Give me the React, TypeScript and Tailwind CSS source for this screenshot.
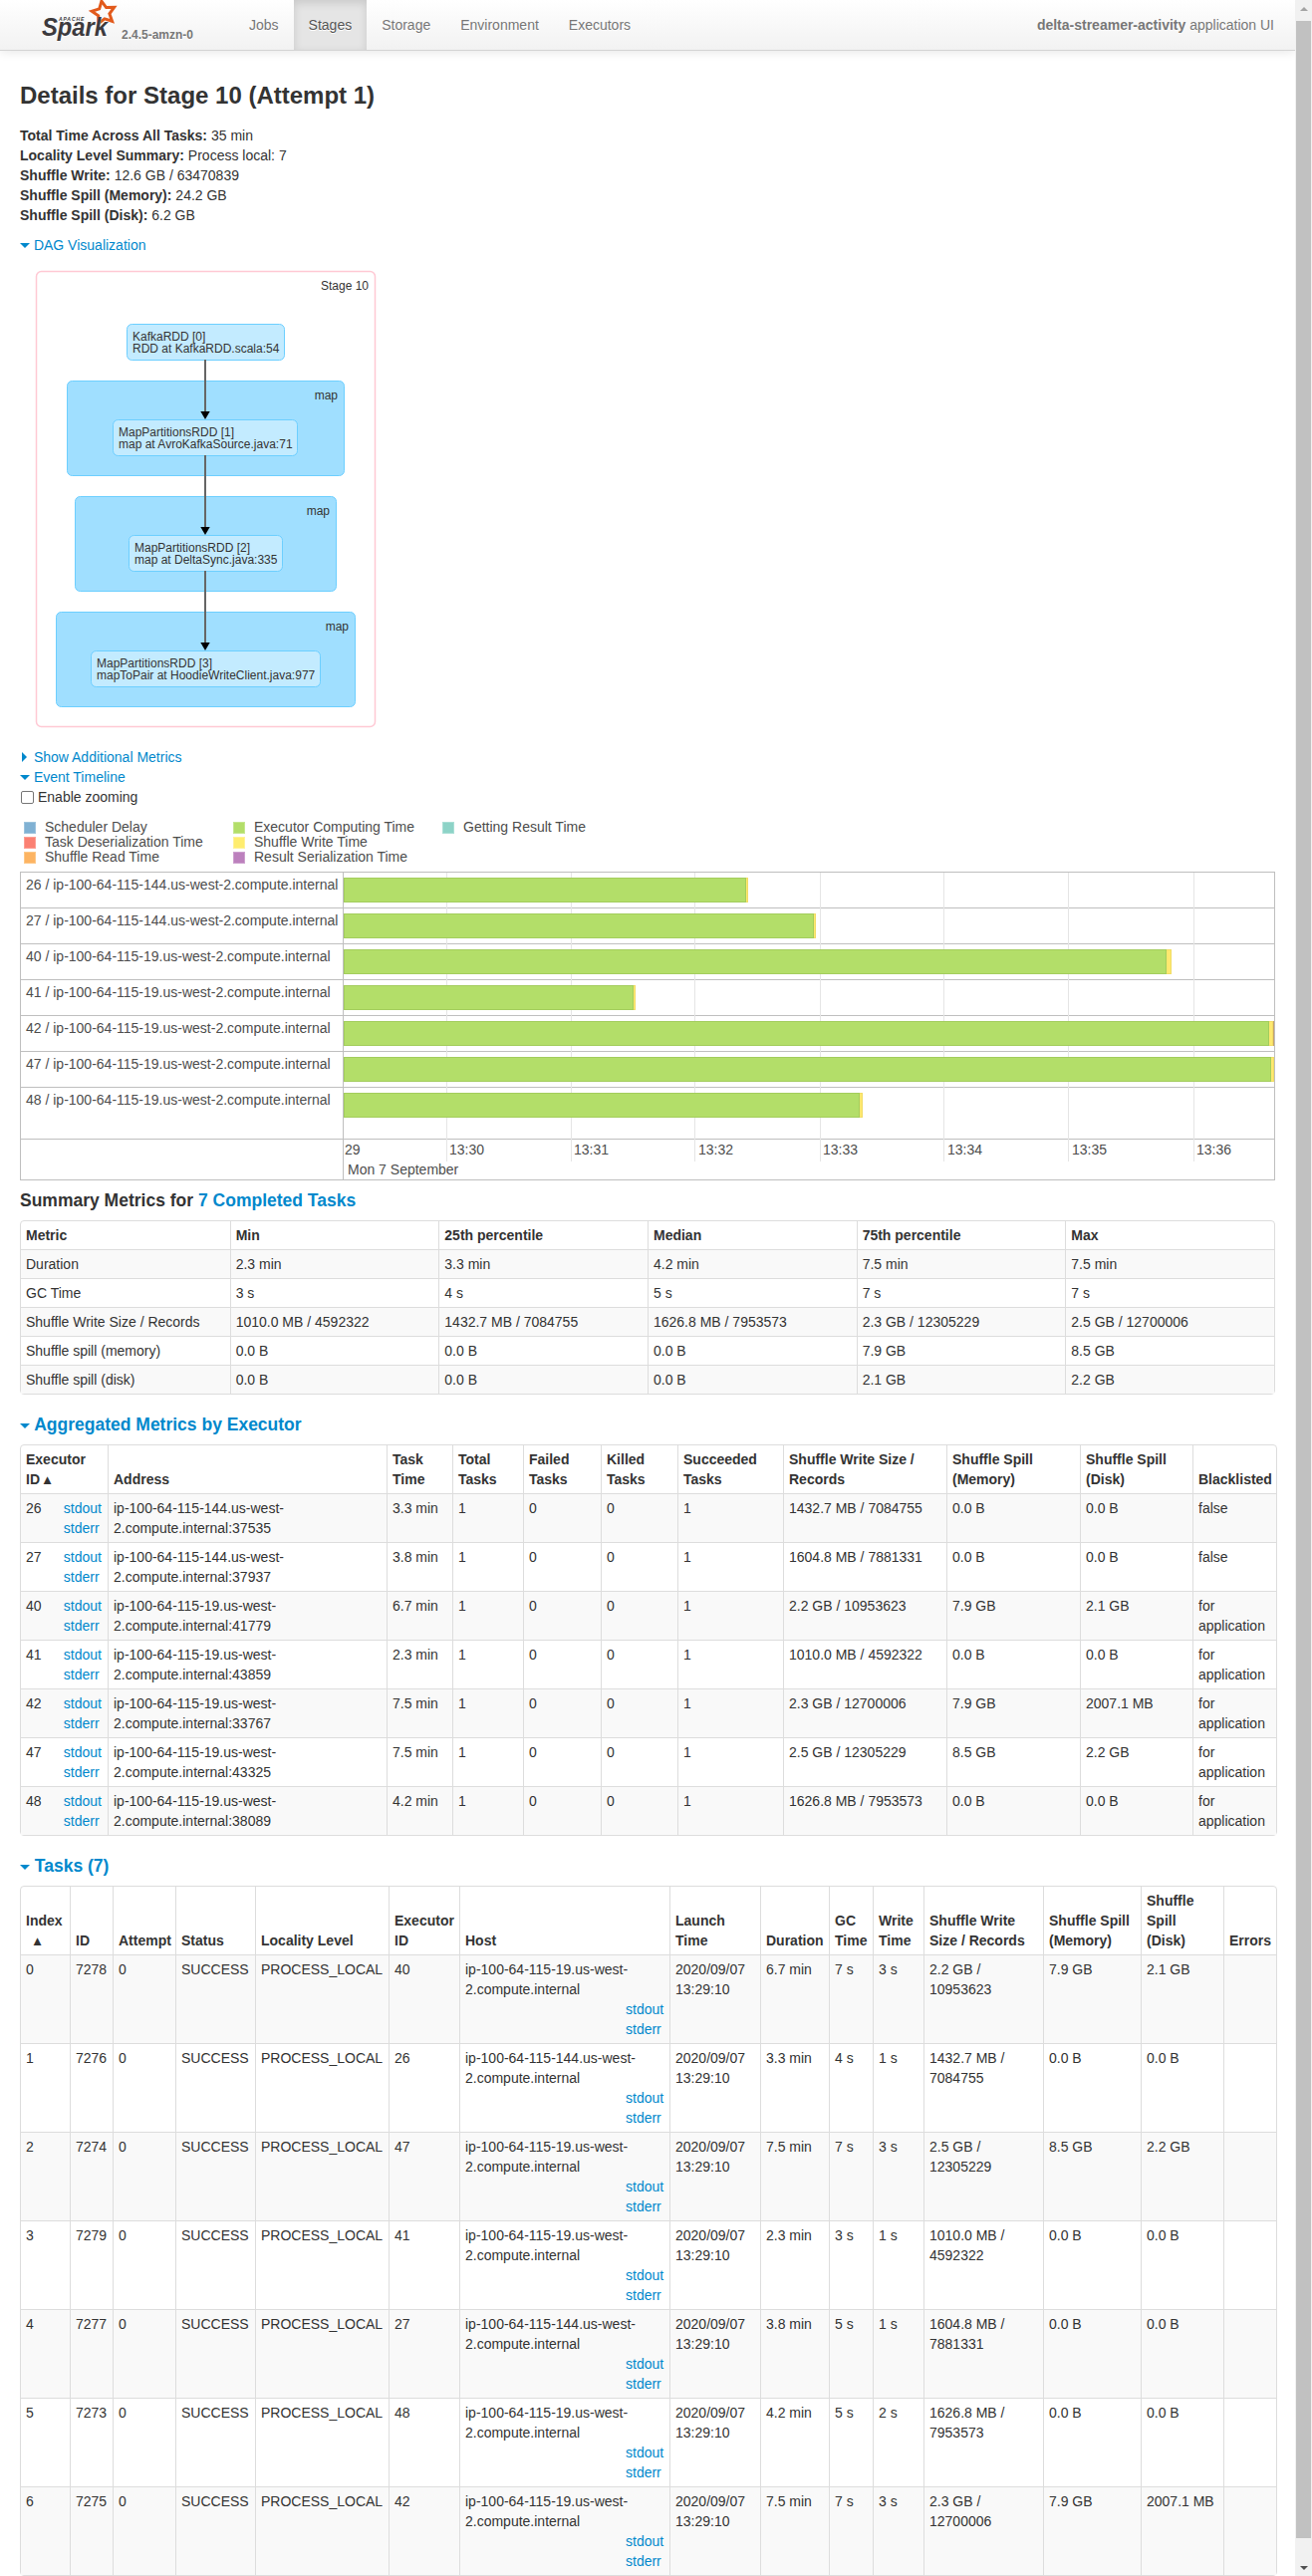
import React from 'react';

const FONT = "font-['Liberation_Sans',Arial,sans-serif]";

const HOST_144 = 'ip-100-64-115-144.us-west-2.compute.internal';
const HOST_19 = 'ip-100-64-115-19.us-west-2.compute.internal';

const summaryRows = [
  ['Duration', '2.3 min', '3.3 min', '4.2 min', '7.5 min', '7.5 min'],
  ['GC Time', '3 s', '4 s', '5 s', '7 s', '7 s'],
  ['Shuffle Write Size / Records', '1010.0 MB / 4592322', '1432.7 MB / 7084755', '1626.8 MB / 7953573', '2.3 GB / 12305229', '2.5 GB / 12700006'],
  ['Shuffle spill (memory)', '0.0 B', '0.0 B', '0.0 B', '7.9 GB', '8.5 GB'],
  ['Shuffle spill (disk)', '0.0 B', '0.0 B', '0.0 B', '2.1 GB', '2.2 GB'],
];

const executors = [
  ['26', HOST_144 + ':37535', '3.3 min', '1432.7 MB / 7084755', '0.0 B', '0.0 B', 'false'],
  ['27', HOST_144 + ':37937', '3.8 min', '1604.8 MB / 7881331', '0.0 B', '0.0 B', 'false'],
  ['40', HOST_19 + ':41779', '6.7 min', '2.2 GB / 10953623', '7.9 GB', '2.1 GB', 'for application'],
  ['41', HOST_19 + ':43859', '2.3 min', '1010.0 MB / 4592322', '0.0 B', '0.0 B', 'for application'],
  ['42', HOST_19 + ':33767', '7.5 min', '2.3 GB / 12700006', '7.9 GB', '2007.1 MB', 'for application'],
  ['47', HOST_19 + ':43325', '7.5 min', '2.5 GB / 12305229', '8.5 GB', '2.2 GB', 'for application'],
  ['48', HOST_19 + ':38089', '4.2 min', '1626.8 MB / 7953573', '0.0 B', '0.0 B', 'for application'],
];

const tasks = [
  ['0', '7278', '40', HOST_19, '6.7 min', '7 s', '3 s', '2.2 GB / 10953623', '7.9 GB', '2.1 GB'],
  ['1', '7276', '26', HOST_144, '3.3 min', '4 s', '1 s', '1432.7 MB / 7084755', '0.0 B', '0.0 B'],
  ['2', '7274', '47', HOST_19, '7.5 min', '7 s', '3 s', '2.5 GB / 12305229', '8.5 GB', '2.2 GB'],
  ['3', '7279', '41', HOST_19, '2.3 min', '3 s', '1 s', '1010.0 MB / 4592322', '0.0 B', '0.0 B'],
  ['4', '7277', '27', HOST_144, '3.8 min', '5 s', '1 s', '1604.8 MB / 7881331', '0.0 B', '0.0 B'],
  ['5', '7273', '48', HOST_19, '4.2 min', '5 s', '2 s', '1626.8 MB / 7953573', '0.0 B', '0.0 B'],
  ['6', '7275', '42', HOST_19, '7.5 min', '7 s', '3 s', '2.3 GB / 12700006', '7.9 GB', '2007.1 MB'],
];

// px widths read off the reference: green run, yellow run, trailing sliver
const timelineRows = [
  { label: '26 / ' + HOST_144, green: 404, yellow: 2, tail: 0 },
  { label: '27 / ' + HOST_144, green: 472, yellow: 2, tail: 0 },
  { label: '40 / ' + HOST_19, green: 826, yellow: 5, tail: 0 },
  { label: '41 / ' + HOST_19, green: 291, yellow: 2, tail: 0 },
  { label: '42 / ' + HOST_19, green: 929, yellow: 4, tail: 1 },
  { label: '47 / ' + HOST_19, green: 931, yellow: 3, tail: 0 },
  { label: '48 / ' + HOST_19, green: 518, yellow: 3, tail: 0 },
];

const gridLines = [427, 552, 676, 802, 926, 1051, 1177];
const axisLabels = [
  { text: '29', left: 325 },
  { text: '13:30', left: 430 },
  { text: '13:31', left: 555 },
  { text: '13:32', left: 680 },
  { text: '13:33', left: 805 },
  { text: '13:34', left: 930 },
  { text: '13:35', left: 1055 },
  { text: '13:36', left: 1180 },
];

const legend = [
  { label: 'Scheduler Delay', swatch: 'bg-[#80b1d3] border-[#9cc3dd]' },
  { label: 'Task Deserialization Time', swatch: 'bg-[#fb8072] border-[#fc9f94]' },
  { label: 'Shuffle Read Time', swatch: 'bg-[#fdb462] border-[#fdc888]' },
  { label: 'Executor Computing Time', swatch: 'bg-[#b3de69] border-[#c6e78f]' },
  { label: 'Shuffle Write Time', swatch: 'bg-[#ffed6f] border-[#fff29a]' },
  { label: 'Result Serialization Time', swatch: 'bg-[#bc80bd] border-[#cda0ce]' },
  { label: 'Getting Result Time', swatch: 'bg-[#8dd3c7] border-[#aadfd6]' },
];

const dagClusters = [
  { x: 47, y: 120, w: 278, h: 95, labelX: 319, labelY: 139 },
  { x: 55, y: 236, w: 262, h: 95, labelX: 311, labelY: 255 },
  { x: 36, y: 352, w: 300, h: 95, labelX: 330, labelY: 371 },
];

const dagNodes = [
  { x: 107, y: 63, w: 158, h: 36, tx: 113, a: 'KafkaRDD [0]', b: 'RDD at KafkaRDD.scala:54' },
  { x: 93, y: 159, w: 185, h: 36, tx: 99, a: 'MapPartitionsRDD [1]', b: 'map at AvroKafkaSource.java:71' },
  { x: 109, y: 275, w: 154, h: 36, tx: 115, a: 'MapPartitionsRDD [2]', b: 'map at DeltaSync.java:335' },
  { x: 71, y: 391, w: 230, h: 36, tx: 77, a: 'MapPartitionsRDD [3]', b: 'mapToPair at HoodieWriteClient.java:977' },
];

const dagEdges = [
  [99, 159],
  [195, 275],
  [311, 391],
];

function starPoints() {
  const pts: string[] = [];
  for (let i = 0; i < 10; i++) {
    const r = i % 2 === 0 ? 12 : 6;
    const a = ((-100 + i * 36) * Math.PI) / 180;
    pts.push(`${(103 + r * Math.cos(a)).toFixed(1)},${(13 + r * Math.sin(a)).toFixed(1)}`);
  }
  return pts.join(' ');
}

function SparkLogo() {
  return (
    <svg width="80" height="44" viewBox="40 0 80 44" className="shrink-0">
      <polygon points={starPoints()} fill="none" stroke="#e25a1c" strokeWidth="3" strokeLinejoin="miter" />
      <text x="58" y="20.5" fontSize="5" fontWeight="700" fontStyle="italic" fill="#3c3a3e" letterSpacing="0.9" fontFamily="'Liberation Sans', Arial, sans-serif">
        APACHE
      </text>
      <text x="41" y="36" fontSize="25" fontWeight="700" fontStyle="italic" fill="#3c3a3e" textLength="66" lengthAdjust="spacingAndGlyphs" fontFamily="'Liberation Sans', Arial, sans-serif">
        Spark
      </text>
    </svg>
  );
}

function Navbar() {
  const tabs = ['Jobs', 'Stages', 'Storage', 'Environment', 'Executors'];
  return (
    <div className="flex h-[51px] items-stretch border-b border-[#d4d4d4] bg-gradient-to-b from-white to-[#f2f2f2] text-[14px] shadow-[0_1px_10px_rgba(0,0,0,0.1)] [text-shadow:0_1px_0_#fff]">
      <div className="flex w-[235px] items-start pl-[41px]">
        <SparkLogo />
        <span className="mt-[27px] ml-[1px] text-[12px] leading-[16px] font-bold text-[#777]">2.4.5-amzn-0</span>
      </div>
      {tabs.map((tab) => (
        <div
          key={tab}
          className={
            tab === 'Stages'
              ? 'bg-[#e5e5e5] px-[15px] leading-[50px] text-[#555] shadow-[inset_0_3px_8px_rgba(0,0,0,0.125)]'
              : 'px-[15px] leading-[50px] text-[#777]'
          }
        >
          {tab}
        </div>
      ))}
      <div className="ml-auto pr-[21px] leading-[50px] text-[#777]">
        <strong>delta-streamer-activity</strong> application UI
      </div>
    </div>
  );
}

function CaretOpen() {
  return <span className="mb-[2px] inline-block border-x-[5px] border-t-[5px] border-x-transparent border-t-[#0088cc]" />;
}

function CaretClosed() {
  return <span className="mr-[3px] ml-[2px] inline-block border-y-[5px] border-l-[5px] border-y-transparent border-l-[#0088cc]" />;
}

function DagViz() {
  return (
    <svg width="360" height="488" viewBox="0 0 360 488" className="mt-[6px] ml-0 block" fontFamily="'Liberation Sans', Arial, sans-serif" fontSize="12">
      <rect x="16.5" y="10.5" width="340" height="457" rx="5" fill="#fff" stroke="#ffc9d4" strokeWidth="1.5" />
      <text x="350" y="29" textAnchor="end" fill="#333">
        Stage 10
      </text>
      {dagClusters.map((c) => (
        <g key={c.y}>
          <rect x={c.x + 0.5} y={c.y + 0.5} width={c.w} height={c.h} rx="5" fill="#a0dfff" stroke="#6dcfff" strokeWidth="1" />
          <text x={c.labelX} y={c.labelY} textAnchor="end" fill="#333">
            map
          </text>
        </g>
      ))}
      {dagNodes.map((n) => (
        <g key={n.y}>
          <rect x={n.x + 0.5} y={n.y + 0.5} width={n.w} height={n.h} rx="5" fill="#c3ebff" stroke="#6dcfff" strokeWidth="1" />
          <text x={n.tx} y={n.y + 17} fill="#333">
            {n.a}
          </text>
          <text x={n.tx} y={n.y + 29} fill="#333">
            {n.b}
          </text>
        </g>
      ))}
      {dagEdges.map(([from, to]) => (
        <g key={from}>
          <line x1="186" y1={from} x2="186" y2={to - 8} stroke="#666" strokeWidth="2" />
          <polygon points={`181.3,${to - 8} 190.7,${to - 8} 186,${to}`} fill="#000" />
        </g>
      ))}
    </svg>
  );
}

function Timeline() {
  return (
    <div className="mt-[7px] w-[1260px] border border-[#bfbfbf] text-[14px] leading-[20px] text-[#4d4d4d]">
      <div className="relative">
        {gridLines.map((x) => (
          <div key={x} className="absolute top-0 h-[290px] w-px bg-[#e5e5e5]" style={{ left: x }} />
        ))}
        {timelineRows.map((row, i) => (
          <div key={row.label} className={i === 6 ? 'flex h-[52px] border-b border-[#bfbfbf]' : 'flex h-[36px] border-b border-[#bfbfbf]'}>
            <div className="relative w-[324px] shrink-0 border-r border-[#bfbfbf] bg-white pt-[2px] pl-[5px] whitespace-nowrap">{row.label}</div>
            <div className="relative flex h-[25px] pt-0 mt-[5px]">
              <div className="border border-[#a3cd5d] bg-[#b3de69]" style={{ width: row.green }} />
              <div className="border-y border-r border-[#f0dc66] bg-[#ffe86f]" style={{ width: row.yellow }} />
              {row.tail > 0 && <div className="bg-[#c6a36b]" style={{ width: row.tail }} />}
            </div>
          </div>
        ))}
        <div className="relative flex h-[40px]">
          <div className="w-[324px] shrink-0 border-r border-[#bfbfbf] bg-white" />
          {axisLabels.map((a) => (
            <span key={a.text} className="absolute top-0" style={{ left: a.left }}>
              {a.text}
            </span>
          ))}
          <span className="absolute top-[20px] left-[328px]">Mon 7 September</span>
        </div>
      </div>
    </div>
  );
}

const TH = 'border-l border-[#ddd] px-[5px] py-1 text-left align-bottom font-bold first:border-l-0';
const TD = 'border-t border-l border-[#ddd] px-[5px] py-1 align-top first:border-l-0';
const TABLE = 'w-[1260px] table-fixed border-separate border-spacing-0 rounded-[4px] border border-[#ddd] text-[14px] leading-[20px]';

function Links() {
  return (
    <div className="text-[#0088cc]">
      <div>stdout</div>
      <div>stderr</div>
    </div>
  );
}

function SummaryTable() {
  const head = ['Metric', 'Min', '25th percentile', 'Median', '75th percentile', 'Max'];
  return (
    <table className={`mt-[10px] ${TABLE}`}>
      <thead>
        <tr>
          {head.map((h) => (
            <th key={h} className={TH}>
              {h}
            </th>
          ))}
        </tr>
      </thead>
      <tbody>
        {summaryRows.map((row, i) => (
          <tr key={row[0]} className={i % 2 === 0 ? 'bg-[#f9f9f9]' : ''}>
            {row.map((v, j) => (
              <td key={j} className={TD}>
                {v}
              </td>
            ))}
          </tr>
        ))}
      </tbody>
    </table>
  );
}

function ExecutorTable() {
  const head: [React.ReactNode, string][] = [
    [<>Executor ID&nbsp;▴</>, 'w-[87px]'],
    ['Address', 'w-[280px]'],
    ['Task Time', 'w-[66px]'],
    ['Total Tasks', 'w-[71px]'],
    ['Failed Tasks', 'w-[78px]'],
    ['Killed Tasks', 'w-[77px]'],
    ['Succeeded Tasks', 'w-[106px]'],
    ['Shuffle Write Size / Records', 'w-[164px]'],
    ['Shuffle Spill (Memory)', 'w-[134px]'],
    ['Shuffle Spill (Disk)', 'w-[113px]'],
    ['Blacklisted', 'w-[84px]'],
  ];
  return (
    <table className={`mt-[10px] ${TABLE}`}>
      <thead>
        <tr>
          {head.map(([h, w], i) => (
            <th key={i} className={`${TH} ${w}`}>
              {h}
            </th>
          ))}
        </tr>
      </thead>
      <tbody>
        {executors.map((e, i) => (
          <tr key={e[0]} className={i % 2 === 0 ? 'bg-[#f9f9f9]' : ''}>
            <td className={TD}>
              <div className="flex justify-between pr-[1px]">
                <span>{e[0]}</span>
                <Links />
              </div>
            </td>
            <td className={TD}>{e[1]}</td>
            <td className={TD}>{e[2]}</td>
            <td className={TD}>1</td>
            <td className={TD}>0</td>
            <td className={TD}>0</td>
            <td className={TD}>1</td>
            <td className={TD}>{e[3]}</td>
            <td className={TD}>{e[4]}</td>
            <td className={TD}>{e[5]}</td>
            <td className={TD}>{e[6]}</td>
          </tr>
        ))}
      </tbody>
    </table>
  );
}

function TasksTable() {
  const head: [React.ReactNode, string][] = [
    [<>Index<br />&nbsp;&nbsp;▴</>, 'w-[49px]'],
    ['ID', 'w-[43px]'],
    ['Attempt', 'w-[63px]'],
    ['Status', 'w-[80px]'],
    ['Locality Level', 'w-[134px]'],
    ['Executor ID', 'w-[71px]'],
    ['Host', 'w-[211px]'],
    ['Launch Time', 'w-[91px]'],
    ['Duration', 'w-[69px]'],
    ['GC Time', 'w-[44px]'],
    ['Write Time', 'w-[51px]'],
    ['Shuffle Write Size / Records', 'w-[120px]'],
    ['Shuffle Spill (Memory)', 'w-[98px]'],
    ['Shuffle Spill (Disk)', 'w-[83px]'],
    ['Errors', 'w-[53px]'],
  ];
  return (
    <table className={`mt-[10px] ${TABLE}`}>
      <thead>
        <tr>
          {head.map(([h, w], i) => (
            <th key={i} className={`${TH} ${w}`}>
              {h}
            </th>
          ))}
        </tr>
      </thead>
      <tbody>
        {tasks.map((t, i) => (
          <tr key={t[0]} className={i % 2 === 0 ? 'bg-[#f9f9f9]' : ''}>
            <td className={TD}>{t[0]}</td>
            <td className={TD}>{t[1]}</td>
            <td className={TD}>0</td>
            <td className={TD}>SUCCESS</td>
            <td className={TD}>PROCESS_LOCAL</td>
            <td className={TD}>{t[2]}</td>
            <td className={TD}>
              {t[3]}
              <div className="flex justify-end pr-[1px]">
                <div className="w-[38px]">
                  <Links />
                </div>
              </div>
            </td>
            <td className={TD}>2020/09/07 13:29:10</td>
            <td className={TD}>{t[4]}</td>
            <td className={TD}>{t[5]}</td>
            <td className={TD}>{t[6]}</td>
            <td className={TD}>{t[7]}</td>
            <td className={TD}>{t[8]}</td>
            <td className={TD}>{t[9]}</td>
            <td className={TD} />
          </tr>
        ))}
      </tbody>
    </table>
  );
}

function Scrollbar() {
  return (
    <div className="flex h-full w-[17px] shrink-0 flex-col items-center bg-[#f1f1f1]">
      <div className="flex h-[21px] w-full items-start justify-center pt-[7px]">
        <span className="border-x-[4px] border-b-[4px] border-x-transparent border-b-[#a3a3a3]" />
      </div>
      <div className="h-[2527px] w-[15px] bg-[#c1c1c1]" />
      <div className="flex flex-1 items-end justify-center pb-[6px]">
        <span className="border-x-[4px] border-t-[4px] border-x-transparent border-t-[#505050]" />
      </div>
    </div>
  );
}

export default function App() {
  return (
    <div className={`flex h-[2586px] overflow-hidden bg-white text-[#333] ${FONT}`}>
      <div className="w-[1300px] shrink-0">
        <Navbar />
        <div className="px-5 text-[14px] leading-[20px]">
          <h3 className="mt-[25px] text-[24px] leading-[40px] font-bold">Details for Stage 10 (Attempt 1)</h3>
          <ul className="mt-[10px]">
            <li><strong>Total Time Across All Tasks:</strong> 35 min</li>
            <li><strong>Locality Level Summary:</strong> Process local: 7</li>
            <li><strong>Shuffle Write:</strong> 12.6 GB / 63470839</li>
            <li><strong>Shuffle Spill (Memory):</strong> 24.2 GB</li>
            <li><strong>Shuffle Spill (Disk):</strong> 6.2 GB</li>
          </ul>

          <div className="mt-[10px] text-[#0088cc]">
            <CaretOpen /> DAG Visualization
          </div>
          <DagViz />

          <div className="text-[#0088cc]">
            <CaretClosed /> Show Additional Metrics
          </div>
          <div className="text-[#0088cc]">
            <CaretOpen /> Event Timeline
          </div>
          <div className="flex items-center">
            <span className="ml-[1px] h-[13px] w-[13px] rounded-[2px] border border-[#767676] bg-white" />
            <span className="ml-[4px]">Enable zooming</span>
          </div>

          <div className="mt-[13px] grid w-fit grid-flow-col grid-rows-3 leading-[15px]">
            {legend.map((item) => (
              <div key={item.label} className="flex w-[210px] items-center pl-[4px]">
                <span className={`h-[12px] w-[12px] border ${item.swatch}`} />
                <span className="ml-[9px] text-[#4d4d4d]">{item.label}</span>
              </div>
            ))}
          </div>

          <Timeline />

          <h4 className="mt-[10px] text-[17.5px] leading-[20px] font-bold">
            Summary Metrics for <span className="text-[#0088cc]">7 Completed Tasks</span>
          </h4>
          <SummaryTable />

          <h4 className="mt-[20px] text-[17.5px] leading-[20px] font-bold text-[#0088cc]">
            <CaretOpen /> Aggregated Metrics by Executor
          </h4>
          <ExecutorTable />

          <h4 className="mt-[20px] text-[17.5px] leading-[20px] font-bold text-[#0088cc]">
            <CaretOpen /> Tasks (7)
          </h4>
          <TasksTable />
        </div>
      </div>
      <Scrollbar />
    </div>
  );
}
